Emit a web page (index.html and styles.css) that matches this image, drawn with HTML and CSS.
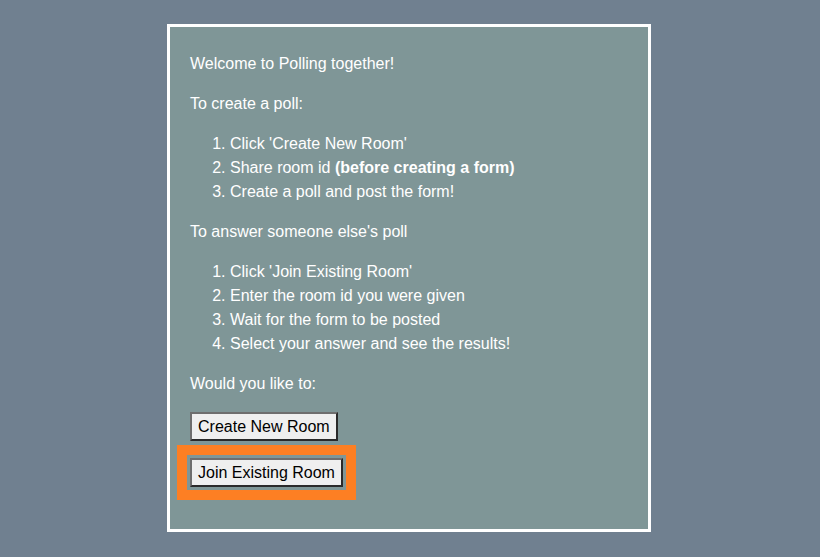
FILE: index.html
```html
<!DOCTYPE html>
<html>
<head>
<meta charset="utf-8">
<link rel="stylesheet" href="styles.css">
</head>
<body>
<div class="card">
  <p>Welcome to Polling together!</p>
  <p>To create a poll:</p>
  <ol>
    <li>Click 'Create New Room'</li>
    <li>Share room id <b>(before creating a form)</b></li>
    <li>Create a poll and post the form!</li>
  </ol>
  <p>To answer someone else's poll</p>
  <ol>
    <li>Click 'Join Existing Room'</li>
    <li>Enter the room id you were given</li>
    <li>Wait for the form to be posted</li>
    <li>Select your answer and see the results!</li>
  </ol>
  <p>Would you like to:</p>
  <div class="actions">
    <button class="btn">Create New Room</button>
    <button class="btn focused">Join Existing Room</button>
  </div>
</div>
</body>
</html>
```
FILE: styles.css
```css
html, body {
  margin: 0;
  padding: 0;
  background: #708090;
}
body {
  font-family: "Liberation Sans", Arial, sans-serif;
  font-size: 16px;
  line-height: 24px;
  color: #ffffff;
}
.card {
  box-sizing: border-box;
  width: 484px;
  margin: 24px 0 0 167px;
  border: 3px solid #ffffff;
  background: #7f9697;
  padding: 9px 20px 42px;
}
.card p {
  margin: 16px 0;
}
.card ol {
  margin: 16px 0;
  padding-left: 40px;
}
.actions {
  display: flex;
  flex-direction: column;
  align-items: flex-start;
  gap: 17px;
}
.btn {
  font-family: "Liberation Sans", Arial, sans-serif;
  font-size: 16px;
  line-height: 19px;
  color: #000;
  background: #efefef;
  padding: 3px 6px;
  border: 2px solid;
  border-color: #6e6e6e #2a2a2a #2a2a2a #6e6e6e;
  border-radius: 0;
  margin: 0;
}
.btn.focused {
  outline: 10px solid #fd7f23;
  outline-offset: 3px;
}
```
